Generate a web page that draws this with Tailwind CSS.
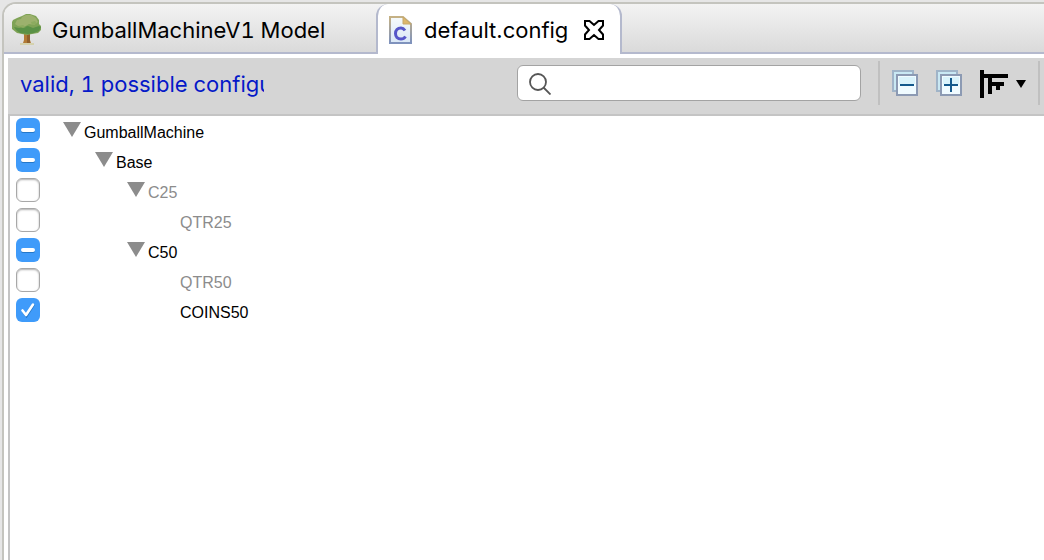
<!DOCTYPE html>
<html lang="en">
<head>
<meta charset="utf-8">
<title>default.config</title>
<script src="https://cdn.jsdelivr.net/npm/@tailwindcss/browser@4"></script>
</head>
<body class="bg-[#e6e6e6] pt-0.5 pl-0.5 font-['Inter',sans-serif] text-black">
<svg class="hidden" aria-hidden="true">
  <symbol id="minus" viewBox="0 0 24 24"><path d="M7 13h10" stroke="#2477c8" stroke-width="4" stroke-linecap="round"/><path d="M7 12h10" stroke="#fff" stroke-width="4" stroke-linecap="round"/></symbol>
  <symbol id="tick" viewBox="0 0 24 24"><path d="M7 13.5l3.5 4.5L17.500 7" fill="none" stroke="#2477c8" stroke-width="2.500" stroke-linecap="round"/><path d="M6.500 12.500l3.500 4.500L17 6.500" fill="none" stroke="#fff" stroke-width="2.600" stroke-linecap="round" stroke-linejoin="round"/></symbol>
  <symbol id="tri" viewBox="0 0 18 15"><path d="M0 0h18L9 15z" fill="#8c8c8c"/></symbol>
</svg>
<div class="flex min-h-[558px] flex-col rounded-tl-[14px] border-t-2 border-l-2 border-[#c4c4be] bg-white">
  <div role="tablist" class="flex h-[50px] rounded-tl-xl bg-linear-to-b from-[#f3f3f3] to-[#d9d9d9]">
    <button role="tab" aria-selected="false" class="flex w-[372px] items-center gap-2.5 border-b-2 border-[#b4b9cd] pt-1 pl-2 text-[22px] tabular-nums whitespace-nowrap">
      <svg class="h-8 w-[30px]" viewBox="0 0 30 32" aria-hidden="true">
        <path d="M8 29h14v2H8z" fill="#d5d2ae"/>
        <path d="M12 17h6v9l1 3h-8l1-3z" fill="#b27a35"/><path d="M15 18h3v11h-3z" fill="#91602b"/>
        <path d="M10 2l4-2h4l6 2 3 4v4l2 2v4l-3 3-6 1-5 1-5-1-5-1-5-4-1-5 2-4 4-2z" fill="#7fa356"/>
        <path d="M10 3l4-2h5l5 3 2 4-4 3-5-1-5 3-6-1-3-2 2-4 4-1z" fill="#9cb16d"/>
        <path d="M2 13l5 1 5-1 4-1 5 2 6-2 2 1-2 4-5 2-6 1-8-1-4-3z" fill="#5a9146"/>
        <path d="M6 12l5-1 3 2-3 1zM19 8l4-1 2 3-5 1z" fill="#8cab5f"/>
      </svg>
      <span>GumballMachineV1 Model</span>
    </button>
    <div class="flex w-[246px] items-center rounded-t-xl border-x-2 border-[#b4b9cd] bg-white pt-0.5 pl-[11px]">
      <button role="tab" aria-selected="true" class="flex items-center gap-3 text-[22px] whitespace-nowrap">
        <svg class="h-7 w-[23px]" viewBox="0 0 23 28" aria-hidden="true">
          <defs><linearGradient id="edge" x2="0" y2="1"><stop stop-color="#c5b184"/><stop offset="1" stop-color="#7e92bd"/></linearGradient><linearGradient id="paper" x2="0" y2="1"><stop stop-color="#f6fafb"/><stop offset="1" stop-color="#d9e7f6"/></linearGradient></defs>
          <path d="M1 1h13l8 7v19H1z" fill="url(#paper)" stroke="url(#edge)" stroke-width="2"/>
          <path d="M14 1v7h8z" fill="#ddb76c" stroke="#c7a86a"/>
          <path d="M16 14.500c-1-1.500-2.500-2.500-4-2.500-3.500 0-5.500 2.500-5.500 5.500s2 5.500 5.500 5.500c2 0 3.500-1 4.500-2.500" fill="none" stroke="#5656c8" stroke-width="3"/>
        </svg>
        <span>default.config</span>
      </button>
      <button aria-label="Close tab" class="ml-[15px]">
        <svg class="h-[22px] w-[22px]" viewBox="0 0 22 22" aria-hidden="true"><path d="M2 2h4.500l4.500 4 4.500-4H20v4.500L16 11l4 4.500V20h-4.500L11 16l-4.500 4H2v-4.500L6 11 2 6.500z" fill="#fff" stroke="#000" stroke-width="2"/></svg>
      </button>
    </div>
    <div class="flex-1 border-b-2 border-[#b4b9cd]"></div>
  </div>

  <div class="mt-1 ml-1 flex h-14 items-center bg-[#d5d5d5] pr-1 pb-1.5">
    <p class="ml-3 w-[244px] shrink-0 overflow-hidden pt-0.5 text-[22px] leading-8 tabular-nums whitespace-nowrap text-[#0519c8]" role="status">valid, 1 possible configurations</p>
    <label class="ml-auto flex h-9 w-[344px] items-center rounded-md border border-[#a3a3a3] bg-white pt-0.5 pl-[11px]">
      <svg class="h-[22px] w-[22px]" viewBox="0 0 22 22" fill="none" stroke="#555" stroke-width="1.800" aria-hidden="true"><circle cx="9" cy="9" r="8"/><path d="M14.500 14.500l7 7"/></svg>
      <input type="search" aria-label="Search features" class="ml-2 min-w-0 flex-1 bg-transparent text-lg outline-none">
    </label>
    <div class="ml-[17px] h-11 w-0.5 bg-[#c0c0c0]"></div>
    <button aria-label="Collapse all" class="ml-3">
      <svg class="h-[26px] w-[26px]" viewBox="0 0 26 26" aria-hidden="true"><path d="M1 1h20v20H1z" fill="#c9e8f3" stroke="#a0b4c8" stroke-width="2"/><path d="M5 5h20v20H5z" fill="#f0fbff" stroke="#8c9ab3" stroke-width="2"/><path d="M7 7h16v7H7z" fill="#daf3fb"/><path d="M8 15h14" stroke="#14598c" stroke-width="2"/></svg>
    </button>
    <button aria-label="Expand all" class="ml-[18px]">
      <svg class="h-[26px] w-[26px]" viewBox="0 0 26 26" aria-hidden="true"><path d="M1 1h20v20H1z" fill="#c9e8f3" stroke="#a0b4c8" stroke-width="2"/><path d="M5 5h20v20H5z" fill="#f0fbff" stroke="#8c9ab3" stroke-width="2"/><path d="M7 7h16v7H7z" fill="#daf3fb"/><path d="M8 15h14M15 8v14" stroke="#14598c" stroke-width="2"/></svg>
    </button>
    <button aria-label="Tree layout" class="ml-[18px] flex items-center gap-2 pt-0.5">
      <svg class="h-7 w-7" viewBox="0 0 28 28" aria-hidden="true"><path d="M0 0h4v4h24v4H12v4h12v4h-4v4h-4v-4h-4v8H8V8H4v20H0z"/></svg>
      <svg class="h-2 w-2.5" viewBox="0 0 10 8" aria-hidden="true"><path d="M0 0h10L5 8z"/></svg>
    </button>
    <div class="ml-3 h-11 w-0.5 bg-[#c0c0c0]"></div>
  </div>

  <ul role="tree" class="ml-1 flex-1 border-t-2 border-l-2 border-[#c4c4c4] bg-white pl-1.5 font-['Liberation_Sans',sans-serif] text-base leading-[30px]">
    <li role="treeitem" class="flex h-[30px] items-start pt-0.5">
      <span class="grid"><input id="f1" type="checkbox" checked class="col-start-1 row-start-1 h-6 w-6 appearance-none rounded-md bg-[#3f9bfa]"><svg class="pointer-events-none col-start-1 row-start-1 h-6 w-6"><use href="#minus"/></svg></span>
      <button aria-label="Collapse GumballMachine" class="ml-[23px] pt-1"><svg class="h-[15px] w-[18px]"><use href="#tri"/></svg></button>
      <label for="f1" class="ml-[3px]">GumballMachine</label>
    </li>
    <li role="treeitem" class="flex h-[30px] items-start pt-0.5">
      <span class="grid"><input id="f2" type="checkbox" checked class="col-start-1 row-start-1 h-6 w-6 appearance-none rounded-md bg-[#3f9bfa]"><svg class="pointer-events-none col-start-1 row-start-1 h-6 w-6"><use href="#minus"/></svg></span>
      <button aria-label="Collapse Base" class="ml-[55px] pt-1"><svg class="h-[15px] w-[18px]"><use href="#tri"/></svg></button>
      <label for="f2" class="ml-[3px]">Base</label>
    </li>
    <li role="treeitem" class="flex h-[30px] items-start pt-0.5">
      <input id="f3" type="checkbox" class="h-6 w-6 appearance-none rounded-md border border-[#a8a8a8] bg-white shadow-[inset_0_1px_2px_#b0b0b0]">
      <button aria-label="Collapse C25" class="ml-[87px] pt-1"><svg class="h-[15px] w-[18px]"><use href="#tri"/></svg></button>
      <label for="f3" class="ml-[3px] text-[#8c8c8c]">C25</label>
    </li>
    <li role="treeitem" class="flex h-[30px] items-start pt-0.5">
      <input id="f4" type="checkbox" class="h-6 w-6 appearance-none rounded-md border border-[#a8a8a8] bg-white shadow-[inset_0_1px_2px_#b0b0b0]">
      <label for="f4" class="ml-[140px] text-[#8c8c8c]">QTR25</label>
    </li>
    <li role="treeitem" class="flex h-[30px] items-start pt-0.5">
      <span class="grid"><input id="f5" type="checkbox" checked class="col-start-1 row-start-1 h-6 w-6 appearance-none rounded-md bg-[#3f9bfa]"><svg class="pointer-events-none col-start-1 row-start-1 h-6 w-6"><use href="#minus"/></svg></span>
      <button aria-label="Collapse C50" class="ml-[87px] pt-1"><svg class="h-[15px] w-[18px]"><use href="#tri"/></svg></button>
      <label for="f5" class="ml-[3px]">C50</label>
    </li>
    <li role="treeitem" class="flex h-[30px] items-start pt-0.5">
      <input id="f6" type="checkbox" class="h-6 w-6 appearance-none rounded-md border border-[#a8a8a8] bg-white shadow-[inset_0_1px_2px_#b0b0b0]">
      <label for="f6" class="ml-[140px] text-[#8c8c8c]">QTR50</label>
    </li>
    <li role="treeitem" class="flex h-[30px] items-start pt-0.5">
      <span class="grid"><input id="f7" type="checkbox" checked class="col-start-1 row-start-1 h-6 w-6 appearance-none rounded-md bg-[#3f9bfa]"><svg class="pointer-events-none col-start-1 row-start-1 h-6 w-6"><use href="#tick"/></svg></span>
      <label for="f7" class="ml-[140px]">COINS50</label>
    </li>
  </ul>
</div>
<script>
  for (const id of ["f1", "f2", "f5"]) document.getElementById(id).indeterminate = true;
</script>
</body>
</html>
